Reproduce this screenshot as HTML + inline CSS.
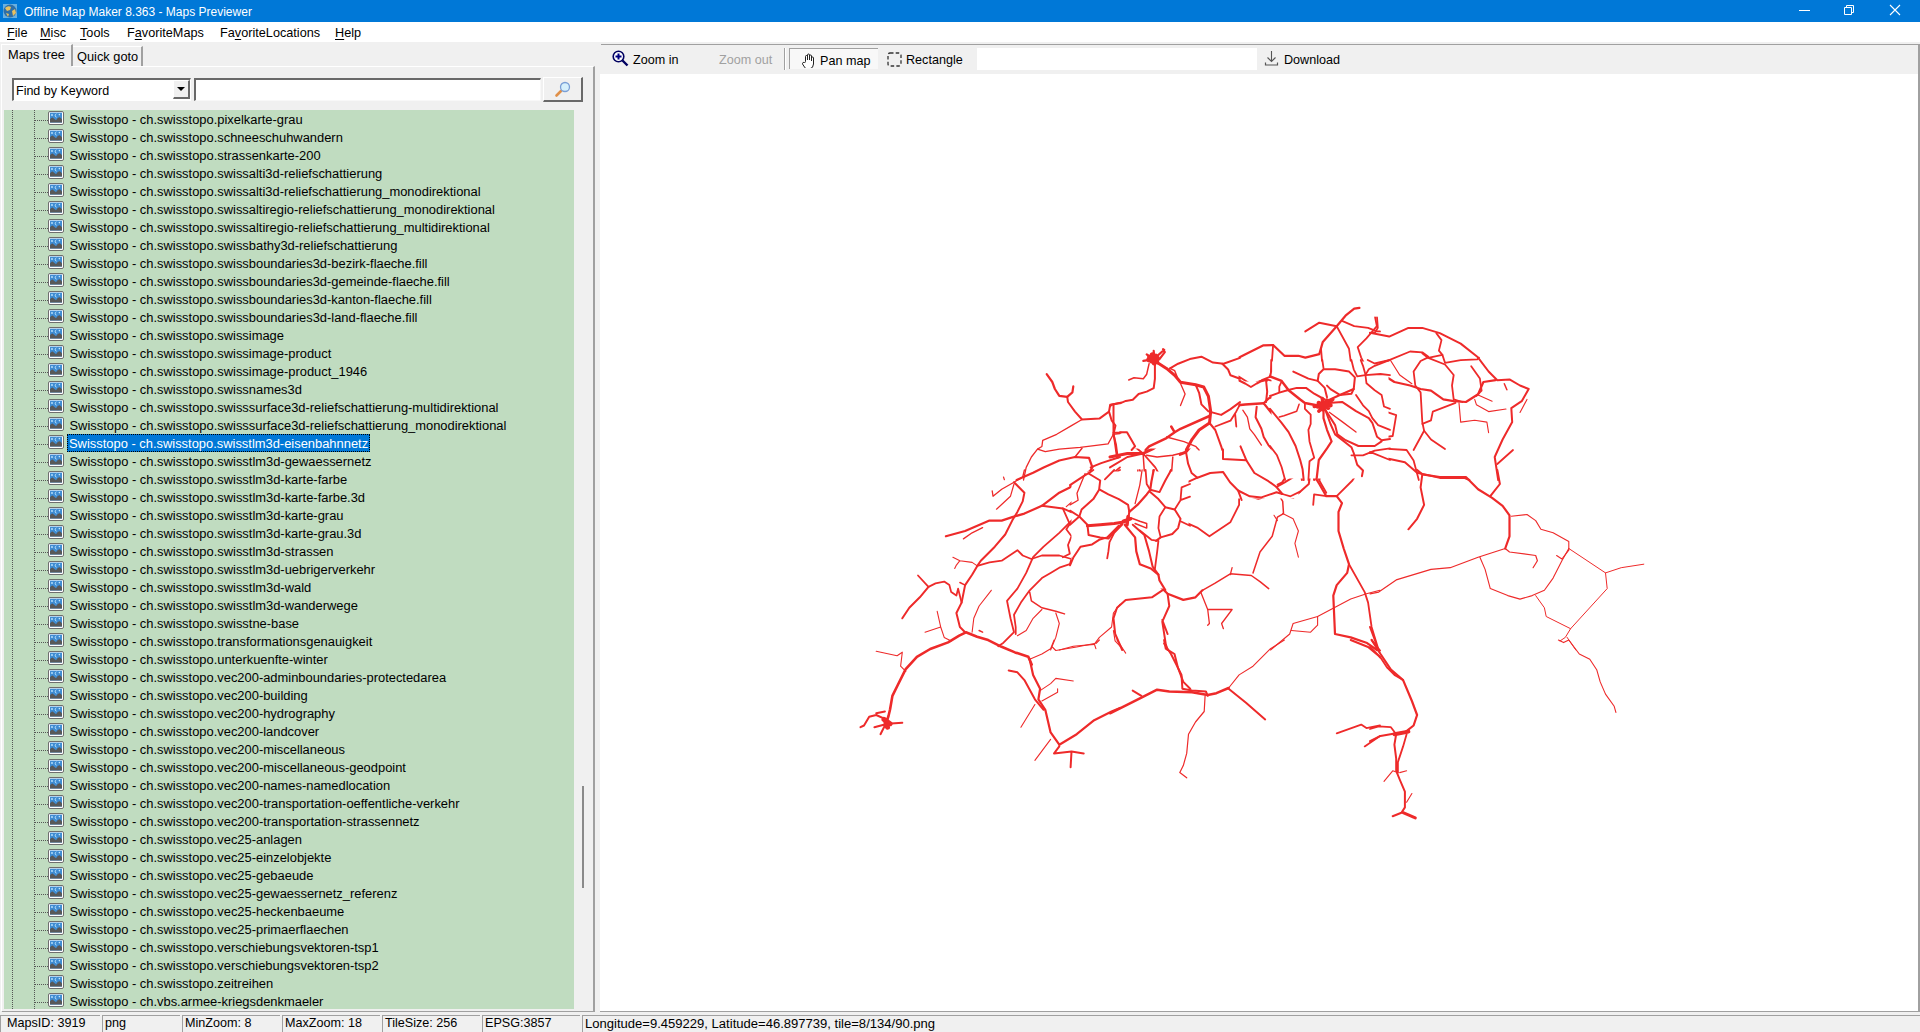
<!DOCTYPE html>
<html><head><meta charset="utf-8">
<style>
*{margin:0;padding:0;box-sizing:border-box}
html,body{width:1920px;height:1032px;overflow:hidden;background:#f0f0f0;font-family:"Liberation Sans",sans-serif;font-size:12px;color:#000}
.abs{position:absolute}
#title{position:absolute;left:0;top:0;width:1920px;height:22px;background:#0078d7;color:#fff}
#title .t{position:absolute;left:24px;top:5px;font-size:12px;line-height:14px;white-space:nowrap}
#menu{position:absolute;left:0;top:22px;width:1920px;height:20px;background:#fff}
#menu span{position:absolute;top:4px;font-size:12.7px;line-height:14px;white-space:nowrap}
#menu u{text-decoration:underline;text-underline-offset:1.5px;text-decoration-thickness:1px}
.tab{position:absolute;font-size:12.8px;line-height:14px;white-space:nowrap}
#panel{position:absolute;left:1px;top:66px;width:594px;height:947px;border-top:1px solid #fff;border-left:1px solid #fff;border-right:2px solid #a0a0a0;border-bottom:2px solid #a0a0a0}
#tree{position:absolute;left:4px;top:110px;width:570px;height:899px;background:#c0dcc0;overflow:hidden}
.row{position:absolute;left:0;width:570px;height:18px}
.row span{position:absolute;left:64.5px;top:2px;font-size:12.92px;line-height:15px;white-space:nowrap;padding:0 1px}
.row.sel span{background:#0078d7;color:#fff;outline:1px dotted #000;outline-offset:-1px;left:63px;padding:2px 2px 0 2px;top:0;line-height:15px;height:18px}
.row .h{position:absolute;left:31px;top:10px;width:13px;border-top:1px dotted #555}
.row .ic{position:absolute;left:44px;top:1px;width:16px;height:14px}
.vd{position:absolute;top:0;height:899px;border-left:1px dotted #555}
#sb{position:absolute;left:575px;top:110px;width:18px;height:899px;background:#f0f0f0}
#sbthumb{position:absolute;left:582px;top:786px;width:2px;height:102px;background:#8a8a8a}
#toolbar{position:absolute;left:601px;top:44px;width:1319px;height:30px;background:#f0f0f0;border-top:1px solid #a0a0a0}
#map{position:absolute;left:600px;top:74px;width:1318px;height:938px;background:#fff}
#mapborder{position:absolute;left:600px;top:1011px;width:1320px;height:2px;background:#a0a0a0}
#maprb{position:absolute;left:1918px;top:44px;width:2px;height:968px;background:#a0a0a0}
.tb{position:absolute;font-size:12.6px;line-height:14px;white-space:nowrap}
#status{position:absolute;left:0;top:1012px;width:1920px;height:20px;background:#f0f0f0}
.cell{position:absolute;top:3px;height:17px;border-top:1px solid #a0a0a0;border-left:1px solid #a0a0a0;font-size:12.6px;line-height:15px;padding-left:6px;white-space:nowrap;overflow:hidden}
</style></head><body>
<svg width="0" height="0" style="position:absolute"><defs><symbol id="ic" viewBox="0 0 16 14">
<rect x="0.5" y="0.5" width="15" height="13" rx="1.5" fill="#fff" stroke="#6e6e6e"/>
<rect x="2" y="1.6" width="12" height="10" fill="#3f8cd2"/>
<path d="M2 11.6V8.2Q3.5 6.2 4.6 6.4L8 9.2Q10 6 11.6 6.2Q13 6.8 14 8.4V11.6z" fill="#585858"/>
<circle cx="4" cy="4" r="0.9" fill="#bfe6ff"/><path d="M8.4 2.8q-1.4.6-1.2 2 .2 1.2 1.4 1.4" fill="none" stroke="#bfe6ff" stroke-width="0.9"/><circle cx="11.4" cy="3.6" r="0.8" fill="#bfe6ff"/>
</symbol></defs></svg>
<div id="title">
 <svg class="abs" style="left:3px;top:4px" width="14" height="14" viewBox="0 0 14 14">
  <rect width="14" height="14" fill="#6ab0e0"/>
  <circle cx="7" cy="7" r="6.5" fill="#2f6fa8"/>
  <path d="M2 4 Q5 1 8 3 L7 6 L4 7 Z M9 7 L12 5 L13 9 L10 12 Z M3 9 L6 10 L5 13 Z" fill="#e8c060"/>
 </svg>
 <div class="t">Offline Map Maker 8.363 - Maps Previewer</div>
 <svg class="abs" style="left:1799px;top:10px" width="11" height="1"><rect width="11" height="1" fill="#fff"/></svg>
 <svg class="abs" style="left:1843px;top:4px" width="12" height="12" viewBox="0 0 12 12"><path d="M1.5 3.5h7v7h-7z M3.5 3.5v-2h7v7h-2" fill="none" stroke="#fff" stroke-width="1"/></svg>
 <svg class="abs" style="left:1889px;top:4px" width="12" height="12" viewBox="0 0 12 12"><path d="M1 1L11 11M11 1L1 11" stroke="#fff" stroke-width="1.1"/></svg>
</div>
<div id="menu">
 <span style="left:7px"><u>F</u>ile</span>
 <span style="left:40px"><u>M</u>isc</span>
 <span style="left:80px"><u>T</u>ools</span>
 <span style="left:127px">F<u>a</u>voriteMaps</span>
 <span style="left:220px">Fa<u>v</u>oriteLocations</span>
 <span style="left:335px"><u>H</u>elp</span>
</div>

<!-- tabs -->
<div class="abs" style="left:1px;top:44px;width:72px;height:23px;background:#f0f0f0;border-top:1px solid #fff;border-left:1px solid #fff;border-right:2px solid #a0a0a0"></div>
<div class="tab" style="left:8px;top:48px">Maps tree</div>
<div class="abs" style="left:73px;top:46px;width:70px;height:20px;background:#f0f0f0;border-top:1px solid #fff;border-right:2px solid #a0a0a0"></div>
<div class="tab" style="left:77px;top:50px">Quick goto</div>

<div id="panel"></div>
<div class="abs" style="left:2px;top:66px;width:70px;height:2px;background:#f0f0f0"></div>

<!-- find bar -->
<div class="abs" style="left:12px;top:78px;width:179px;height:23px;background:#fff;border-top:2px solid #696969;border-left:2px solid #696969;border-bottom:1px solid #fff;border-right:1px solid #fff"></div>
<div class="tb" style="left:16px;top:84px;font-size:12.5px">Find by Keyword</div>
<div class="abs" style="left:173px;top:80px;width:17px;height:19px;background:#f0f0f0;border-top:1px solid #fff;border-left:1px solid #fff;border-right:2px solid #696969;border-bottom:2px solid #696969"></div>
<svg class="abs" style="left:177px;top:87px" width="8" height="5"><path d="M0 0h8L4 4z" fill="#000"/></svg>
<div class="abs" style="left:194px;top:78px;width:347px;height:23px;background:#fff;border-top:2px solid #696969;border-left:2px solid #696969;border-bottom:1px solid #f8f8f8;border-right:1px solid #f8f8f8"></div>
<div class="abs" style="left:543px;top:77px;width:40px;height:25px;background:#f0f0f0;border-top:1px solid #fff;border-left:1px solid #fff;border-right:2px solid #696969;border-bottom:2px solid #696969"></div>
<svg class="abs" style="left:554px;top:81px" width="18" height="17" viewBox="0 0 18 17">
 <line x1="2.5" y1="14.5" x2="7" y2="10" stroke="#e09048" stroke-width="2.6" stroke-linecap="round"/>
 <circle cx="11" cy="6" r="4.5" fill="#d6f0fc" stroke="#7a9fd6" stroke-width="1.3"/>
</svg>

<div id="tree">
 <div class="vd" style="left:8px"></div>
 <div class="vd" style="left:30px"></div>
<div class="row" style="top:0px"><i class="h"></i><svg class="ic" viewBox="0 0 16 14"><use href="#ic"/></svg><span>Swisstopo - ch.swisstopo.pixelkarte-grau</span></div>
<div class="row" style="top:18px"><i class="h"></i><svg class="ic" viewBox="0 0 16 14"><use href="#ic"/></svg><span>Swisstopo - ch.swisstopo.schneeschuhwandern</span></div>
<div class="row" style="top:36px"><i class="h"></i><svg class="ic" viewBox="0 0 16 14"><use href="#ic"/></svg><span>Swisstopo - ch.swisstopo.strassenkarte-200</span></div>
<div class="row" style="top:54px"><i class="h"></i><svg class="ic" viewBox="0 0 16 14"><use href="#ic"/></svg><span>Swisstopo - ch.swisstopo.swissalti3d-reliefschattierung</span></div>
<div class="row" style="top:72px"><i class="h"></i><svg class="ic" viewBox="0 0 16 14"><use href="#ic"/></svg><span>Swisstopo - ch.swisstopo.swissalti3d-reliefschattierung_monodirektional</span></div>
<div class="row" style="top:90px"><i class="h"></i><svg class="ic" viewBox="0 0 16 14"><use href="#ic"/></svg><span>Swisstopo - ch.swisstopo.swissaltiregio-reliefschattierung_monodirektional</span></div>
<div class="row" style="top:108px"><i class="h"></i><svg class="ic" viewBox="0 0 16 14"><use href="#ic"/></svg><span>Swisstopo - ch.swisstopo.swissaltiregio-reliefschattierung_multidirektional</span></div>
<div class="row" style="top:126px"><i class="h"></i><svg class="ic" viewBox="0 0 16 14"><use href="#ic"/></svg><span>Swisstopo - ch.swisstopo.swissbathy3d-reliefschattierung</span></div>
<div class="row" style="top:144px"><i class="h"></i><svg class="ic" viewBox="0 0 16 14"><use href="#ic"/></svg><span>Swisstopo - ch.swisstopo.swissboundaries3d-bezirk-flaeche.fill</span></div>
<div class="row" style="top:162px"><i class="h"></i><svg class="ic" viewBox="0 0 16 14"><use href="#ic"/></svg><span>Swisstopo - ch.swisstopo.swissboundaries3d-gemeinde-flaeche.fill</span></div>
<div class="row" style="top:180px"><i class="h"></i><svg class="ic" viewBox="0 0 16 14"><use href="#ic"/></svg><span>Swisstopo - ch.swisstopo.swissboundaries3d-kanton-flaeche.fill</span></div>
<div class="row" style="top:198px"><i class="h"></i><svg class="ic" viewBox="0 0 16 14"><use href="#ic"/></svg><span>Swisstopo - ch.swisstopo.swissboundaries3d-land-flaeche.fill</span></div>
<div class="row" style="top:216px"><i class="h"></i><svg class="ic" viewBox="0 0 16 14"><use href="#ic"/></svg><span>Swisstopo - ch.swisstopo.swissimage</span></div>
<div class="row" style="top:234px"><i class="h"></i><svg class="ic" viewBox="0 0 16 14"><use href="#ic"/></svg><span>Swisstopo - ch.swisstopo.swissimage-product</span></div>
<div class="row" style="top:252px"><i class="h"></i><svg class="ic" viewBox="0 0 16 14"><use href="#ic"/></svg><span>Swisstopo - ch.swisstopo.swissimage-product_1946</span></div>
<div class="row" style="top:270px"><i class="h"></i><svg class="ic" viewBox="0 0 16 14"><use href="#ic"/></svg><span>Swisstopo - ch.swisstopo.swissnames3d</span></div>
<div class="row" style="top:288px"><i class="h"></i><svg class="ic" viewBox="0 0 16 14"><use href="#ic"/></svg><span>Swisstopo - ch.swisstopo.swisssurface3d-reliefschattierung-multidirektional</span></div>
<div class="row" style="top:306px"><i class="h"></i><svg class="ic" viewBox="0 0 16 14"><use href="#ic"/></svg><span>Swisstopo - ch.swisstopo.swisssurface3d-reliefschattierung_monodirektional</span></div>
<div class="row sel" style="top:324px"><i class="h"></i><svg class="ic" viewBox="0 0 16 14"><use href="#ic"/></svg><span>Swisstopo - ch.swisstopo.swisstlm3d-eisenbahnnetz</span></div>
<div class="row" style="top:342px"><i class="h"></i><svg class="ic" viewBox="0 0 16 14"><use href="#ic"/></svg><span>Swisstopo - ch.swisstopo.swisstlm3d-gewaessernetz</span></div>
<div class="row" style="top:360px"><i class="h"></i><svg class="ic" viewBox="0 0 16 14"><use href="#ic"/></svg><span>Swisstopo - ch.swisstopo.swisstlm3d-karte-farbe</span></div>
<div class="row" style="top:378px"><i class="h"></i><svg class="ic" viewBox="0 0 16 14"><use href="#ic"/></svg><span>Swisstopo - ch.swisstopo.swisstlm3d-karte-farbe.3d</span></div>
<div class="row" style="top:396px"><i class="h"></i><svg class="ic" viewBox="0 0 16 14"><use href="#ic"/></svg><span>Swisstopo - ch.swisstopo.swisstlm3d-karte-grau</span></div>
<div class="row" style="top:414px"><i class="h"></i><svg class="ic" viewBox="0 0 16 14"><use href="#ic"/></svg><span>Swisstopo - ch.swisstopo.swisstlm3d-karte-grau.3d</span></div>
<div class="row" style="top:432px"><i class="h"></i><svg class="ic" viewBox="0 0 16 14"><use href="#ic"/></svg><span>Swisstopo - ch.swisstopo.swisstlm3d-strassen</span></div>
<div class="row" style="top:450px"><i class="h"></i><svg class="ic" viewBox="0 0 16 14"><use href="#ic"/></svg><span>Swisstopo - ch.swisstopo.swisstlm3d-uebrigerverkehr</span></div>
<div class="row" style="top:468px"><i class="h"></i><svg class="ic" viewBox="0 0 16 14"><use href="#ic"/></svg><span>Swisstopo - ch.swisstopo.swisstlm3d-wald</span></div>
<div class="row" style="top:486px"><i class="h"></i><svg class="ic" viewBox="0 0 16 14"><use href="#ic"/></svg><span>Swisstopo - ch.swisstopo.swisstlm3d-wanderwege</span></div>
<div class="row" style="top:504px"><i class="h"></i><svg class="ic" viewBox="0 0 16 14"><use href="#ic"/></svg><span>Swisstopo - ch.swisstopo.swisstne-base</span></div>
<div class="row" style="top:522px"><i class="h"></i><svg class="ic" viewBox="0 0 16 14"><use href="#ic"/></svg><span>Swisstopo - ch.swisstopo.transformationsgenauigkeit</span></div>
<div class="row" style="top:540px"><i class="h"></i><svg class="ic" viewBox="0 0 16 14"><use href="#ic"/></svg><span>Swisstopo - ch.swisstopo.unterkuenfte-winter</span></div>
<div class="row" style="top:558px"><i class="h"></i><svg class="ic" viewBox="0 0 16 14"><use href="#ic"/></svg><span>Swisstopo - ch.swisstopo.vec200-adminboundaries-protectedarea</span></div>
<div class="row" style="top:576px"><i class="h"></i><svg class="ic" viewBox="0 0 16 14"><use href="#ic"/></svg><span>Swisstopo - ch.swisstopo.vec200-building</span></div>
<div class="row" style="top:594px"><i class="h"></i><svg class="ic" viewBox="0 0 16 14"><use href="#ic"/></svg><span>Swisstopo - ch.swisstopo.vec200-hydrography</span></div>
<div class="row" style="top:612px"><i class="h"></i><svg class="ic" viewBox="0 0 16 14"><use href="#ic"/></svg><span>Swisstopo - ch.swisstopo.vec200-landcover</span></div>
<div class="row" style="top:630px"><i class="h"></i><svg class="ic" viewBox="0 0 16 14"><use href="#ic"/></svg><span>Swisstopo - ch.swisstopo.vec200-miscellaneous</span></div>
<div class="row" style="top:648px"><i class="h"></i><svg class="ic" viewBox="0 0 16 14"><use href="#ic"/></svg><span>Swisstopo - ch.swisstopo.vec200-miscellaneous-geodpoint</span></div>
<div class="row" style="top:666px"><i class="h"></i><svg class="ic" viewBox="0 0 16 14"><use href="#ic"/></svg><span>Swisstopo - ch.swisstopo.vec200-names-namedlocation</span></div>
<div class="row" style="top:684px"><i class="h"></i><svg class="ic" viewBox="0 0 16 14"><use href="#ic"/></svg><span>Swisstopo - ch.swisstopo.vec200-transportation-oeffentliche-verkehr</span></div>
<div class="row" style="top:702px"><i class="h"></i><svg class="ic" viewBox="0 0 16 14"><use href="#ic"/></svg><span>Swisstopo - ch.swisstopo.vec200-transportation-strassennetz</span></div>
<div class="row" style="top:720px"><i class="h"></i><svg class="ic" viewBox="0 0 16 14"><use href="#ic"/></svg><span>Swisstopo - ch.swisstopo.vec25-anlagen</span></div>
<div class="row" style="top:738px"><i class="h"></i><svg class="ic" viewBox="0 0 16 14"><use href="#ic"/></svg><span>Swisstopo - ch.swisstopo.vec25-einzelobjekte</span></div>
<div class="row" style="top:756px"><i class="h"></i><svg class="ic" viewBox="0 0 16 14"><use href="#ic"/></svg><span>Swisstopo - ch.swisstopo.vec25-gebaeude</span></div>
<div class="row" style="top:774px"><i class="h"></i><svg class="ic" viewBox="0 0 16 14"><use href="#ic"/></svg><span>Swisstopo - ch.swisstopo.vec25-gewaessernetz_referenz</span></div>
<div class="row" style="top:792px"><i class="h"></i><svg class="ic" viewBox="0 0 16 14"><use href="#ic"/></svg><span>Swisstopo - ch.swisstopo.vec25-heckenbaeume</span></div>
<div class="row" style="top:810px"><i class="h"></i><svg class="ic" viewBox="0 0 16 14"><use href="#ic"/></svg><span>Swisstopo - ch.swisstopo.vec25-primaerflaechen</span></div>
<div class="row" style="top:828px"><i class="h"></i><svg class="ic" viewBox="0 0 16 14"><use href="#ic"/></svg><span>Swisstopo - ch.swisstopo.verschiebungsvektoren-tsp1</span></div>
<div class="row" style="top:846px"><i class="h"></i><svg class="ic" viewBox="0 0 16 14"><use href="#ic"/></svg><span>Swisstopo - ch.swisstopo.verschiebungsvektoren-tsp2</span></div>
<div class="row" style="top:864px"><i class="h"></i><svg class="ic" viewBox="0 0 16 14"><use href="#ic"/></svg><span>Swisstopo - ch.swisstopo.zeitreihen</span></div>
<div class="row" style="top:882px"><i class="h"></i><svg class="ic" viewBox="0 0 16 14"><use href="#ic"/></svg><span>Swisstopo - ch.vbs.armee-kriegsdenkmaeler</span></div>
</div>
<div id="sb"></div>
<div id="sbthumb"></div>

<!-- map side -->
<div id="toolbar"></div>
<svg class="abs" style="left:612px;top:50px" width="17" height="17" viewBox="0 0 17 17">
 <circle cx="6.5" cy="6.5" r="5.3" fill="#fff" stroke="#000060" stroke-width="1.6"/>
 <path d="M6.5 3.5v6M3.5 6.5h6" stroke="#000080" stroke-width="2"/>
 <path d="M10.5 10.5L15.5 15.5" stroke="#000060" stroke-width="2.4"/>
</svg>
<div class="tb" style="left:633px;top:53px">Zoom in</div>
<div class="tb" style="left:719px;top:53px;color:#a0a0a0">Zoom out</div>
<div class="abs" style="left:784px;top:48px;width:1px;height:22px;background:#a0a0a0"></div>
<div class="abs" style="left:785px;top:48px;width:1px;height:22px;background:#fff"></div>
<div class="abs" style="left:789px;top:48px;width:89px;height:21px;background:#f8f8f8;border-top:1px solid #a0a0a0;border-left:1px solid #a0a0a0"></div>
<svg class="abs" style="left:802px;top:53px" width="13" height="15" viewBox="0 0 13 15">
 <path d="M3.5 8.5V3.5q0-1 1-1t1 1V7 2q0-1 1-1t1 1v5-4q0-1 1-1t1 1v5-3q0-1 1-1t1 1v6q0 4-4 5h-2q-2 0-3-2l-2-3q-.5-1 .5-1.5t1.5.5z" fill="#fff" stroke="#222" stroke-width="1"/>
</svg>
<div class="tb" style="left:820px;top:54px">Pan map</div>
<svg class="abs" style="left:887px;top:52px" width="15" height="15" viewBox="0 0 15 15">
 <rect x="1" y="1" width="13" height="13" rx="2" fill="none" stroke="#333" stroke-width="1.3" stroke-dasharray="3.5 2.2"/>
</svg>
<div class="tb" style="left:906px;top:53px">Rectangle</div>
<div class="abs" style="left:977px;top:48px;width:280px;height:22px;background:#fff"></div>
<svg class="abs" style="left:1264px;top:50px" width="15" height="17" viewBox="0 0 15 17">
 <path d="M7.5 1v10M3.5 7.5l4 4 4-4" fill="none" stroke="#555" stroke-width="1.1"/>
 <path d="M1.5 12.5v2.5h12v-2.5" fill="none" stroke="#555" stroke-width="1.2"/>
</svg>
<div class="tb" style="left:1284px;top:53px">Download</div>

<div id="map"><svg width="1318" height="938" viewBox="600 74 1318 938" style="position:absolute;left:0;top:0">
<defs>
<mask id="mb" maskUnits="userSpaceOnUse" x="600" y="74" width="1318" height="938"><rect x="600" y="74" width="1318" height="938" fill="#fff"/><rect x="1271.5" y="361.5" width="117.0" height="117.0" fill="#000"/><rect x="1121.5" y="331.5" width="117.0" height="117.0" fill="#000"/><rect x="1071.5" y="471.5" width="117.0" height="117.0" fill="#000"/><rect x="1181.5" y="381.5" width="117.0" height="117.0" fill="#000"/></mask>
<mask id="md0" maskUnits="userSpaceOnUse" x="600" y="74" width="1318" height="938"><rect x="1268.5" y="358.5" width="123.0" height="123.0" fill="#fff"/></mask>
<mask id="md1" maskUnits="userSpaceOnUse" x="600" y="74" width="1318" height="938"><rect x="1118.5" y="328.5" width="123.0" height="123.0" fill="#fff"/><rect x="1271.5" y="361.5" width="117.0" height="117.0" fill="#000"/></mask>
<mask id="md2" maskUnits="userSpaceOnUse" x="600" y="74" width="1318" height="938"><rect x="1068.5" y="468.5" width="123.0" height="123.0" fill="#fff"/><rect x="1271.5" y="361.5" width="117.0" height="117.0" fill="#000"/><rect x="1121.5" y="331.5" width="117.0" height="117.0" fill="#000"/></mask>
<mask id="md3" maskUnits="userSpaceOnUse" x="600" y="74" width="1318" height="938"><rect x="1178.5" y="378.5" width="123.0" height="123.0" fill="#fff"/><rect x="1271.5" y="361.5" width="117.0" height="117.0" fill="#000"/><rect x="1121.5" y="331.5" width="117.0" height="117.0" fill="#000"/><rect x="1071.5" y="471.5" width="117.0" height="117.0" fill="#000"/></mask>
</defs>
<g fill="none" stroke="#ee2a2a" stroke-linejoin="round" stroke-linecap="round">
<g mask="url(#mb)">
<path stroke-width="2.20" d="M1046.7,374.1 L1052.3,382.0 L1054.9,389.0 L1059.3,395.9 L1067.2,396.8 L1072.4,392.4 L1073.3,386.3"/>
<path stroke-width="2.00" d="M1067.2,396.8 L1068.0,402.0 L1075.0,411.6 L1082.0,419.5 L1099.4,418.6 L1109.0,411.6 L1110.2,404.7 L1120.0,402.9"/>
<path stroke-width="2.00" d="M1109.0,411.6 L1111.6,420.3 L1115.5,425.6 L1113.4,434.3 L1116.0,444.8 L1117.7,457.8"/>
<path stroke-width="1.50" d="M1113.4,434.3 L1120.0,433.4"/>
<path stroke-width="1.30" d="M1082.0,419.5 L1071.5,425.6 L1056.7,434.3 L1042.7,440.4 L1041.9,446.5 L1037.5,449.1 L1031.4,457.0 L1026.2,467.4 L1023.5,480.0"/>
<path stroke-width="1.30" d="M1037.5,449.1 L1045.3,451.7 L1059.3,449.1 L1080.2,447.4 L1108.1,443.9 L1113.4,434.3"/>
<path stroke-width="2.20" d="M1016.6,480.0 L1033.1,472.7 L1043.6,467.4 L1059.3,460.5 L1075.0,457.0 L1089.0,457.8 L1092.4,467.4 L1089.0,472.7 L1080.2,480.0"/>
<path stroke-width="1.50" d="M1075.0,457.0 L1082.0,448.3"/>
<path stroke-width="1.80" d="M1089.0,472.7 L1099.4,480.0"/>
<path stroke-width="2.00" d="M1090.7,467.4 L1101.2,463.1 L1117.7,457.8 L1120.0,457.0"/>
<path stroke-width="1.80" d="M1104.7,480.0 L1120.0,467.4"/>
<path stroke-width="1.20" d="M1003.5,477.0 L1004.4,479.7"/>
<path stroke-width="6.00" d="M1150.1,357.6 L1157.1,361.0 M1152.7,354.1 L1154.5,364.5 M1147.5,361.0 L1159.7,357.6"/>
<path stroke-width="2.20" d="M1153.6,359.3 L1172.8,365.4 L1185.0,361.0 L1200.7,356.7 L1221.6,363.7 L1232.1,361.0 L1246.0,354.1 L1263.5,345.3 L1273.1,345.0 L1284.4,355.8 L1298.4,355.8 L1305.3,357.6 L1319.3,354.1 L1322.8,341.9 L1336.7,326.2 L1345.5,315.7 L1354.2,308.7 L1359.4,307.8"/>
<path stroke-width="2.00" d="M1336.7,326.2 L1319.3,322.7 L1305.3,331.4"/>
<path stroke-width="1.80" d="M1342.0,320.9 L1354.2,326.2 L1368.1,327.9 L1376.9,331.4 L1380.0,331.4"/>
<path stroke-width="3.00" d="M1153.6,359.3 L1174.5,371.5 L1183.3,382.0 L1197.2,383.7 L1205.9,392.4 L1209.4,411.6 L1209.4,422.1"/>
<path stroke-width="1.50" d="M1174.5,371.5 L1173.7,365.4"/>
<path stroke-width="1.30" d="M1179.8,382.0 L1185.0,392.4 L1180.6,404.7"/>
<path stroke-width="2.00" d="M1153.6,360.2 L1154.5,373.3 L1153.6,389.0 L1141.4,392.4 L1127.4,401.2 L1111.7,404.7 L1110.0,406.4"/>
<path stroke-width="1.30" d="M1153.6,366.3 L1144.9,376.7 L1129.2,380.2"/>
<path stroke-width="1.80" d="M1197.2,383.7 L1199.0,394.2 L1204.2,408.1 L1210.3,413.4"/>
<path stroke-width="3.00" d="M1209.4,415.1 L1192.0,422.1 L1176.3,430.8 L1167.6,437.8 L1153.6,448.3 L1143.1,453.5 L1127.4,453.5 L1110.0,457.0"/>
<path stroke-width="1.50" d="M1171.0,424.7 L1172.8,430.8"/>
<path stroke-width="2.50" d="M1210.3,413.4 L1218.1,415.1 L1228.6,408.1 L1235.6,404.7 L1249.5,402.9 L1261.7,402.9 L1267.0,397.7 L1279.2,392.4 L1289.7,392.4 L1301.9,401.2 L1319.3,404.7"/>
<path stroke-width="2.00" d="M1209.4,422.1 L1214.7,427.3 L1221.6,443.0 L1223.4,458.7 L1246.0,460.5 L1258.3,474.4 L1261.7,480.0"/>
<path stroke-width="2.50" d="M1209.4,422.1 L1199.0,434.3 L1188.5,448.3 L1186.7,457.0 L1192.0,474.4 L1195.5,480.0"/>
<path stroke-width="1.50" d="M1186.7,451.7 L1172.8,455.2 L1157.1,457.0 L1146.6,455.2"/>
<path stroke-width="1.50" d="M1258.3,403.8 L1256.5,411.6 L1261.7,430.8 L1265.2,444.8 L1274.0,464.0 L1281.8,480.0"/>
<path stroke-width="2.00" d="M1263.5,402.9 L1275.7,413.4 L1284.4,425.6 L1293.1,443.0 L1300.1,464.0 L1301.9,480.0"/>
<path stroke-width="1.20" d="M1242.6,408.1 L1247.8,422.1 L1254.8,432.6 L1260.9,444.8"/>
<path stroke-width="1.20" d="M1235.6,406.4 L1235.9,427.3"/>
<path stroke-width="1.50" d="M1239.1,444.8 L1246.0,458.7"/>
<path stroke-width="1.80" d="M1267.0,380.2 L1267.0,397.7"/>
<path stroke-width="1.80" d="M1256.5,382.0 L1267.0,379.4 L1280.9,383.7 L1286.2,390.7"/>
<path stroke-width="1.80" d="M1221.6,363.7 L1230.3,375.0 L1239.1,376.7 L1253.0,385.5 L1261.7,380.2 L1270.5,376.7"/>
<path stroke-width="1.80" d="M1273.1,345.0 L1272.2,357.6 L1270.5,376.7"/>
<path stroke-width="3.00" d="M1280.9,383.7 L1301.9,401.2"/>
<path stroke-width="1.20" d="M1298.4,401.2 L1297.5,411.6 L1282.7,416.9"/>
<path stroke-width="7.00" d="M1319.3,402.9 L1326.3,409.9 M1317.6,408.1 L1328.0,404.7 M1322.8,399.4 L1323.7,413.4"/>
<path stroke-width="2.00" d="M1322.8,406.4 L1326.3,397.7 L1336.7,394.2 L1352.4,395.1 L1354.2,382.0 L1349.0,373.3 L1333.3,369.8 L1321.0,373.3 L1317.6,382.0 L1326.3,394.2"/>
<path stroke-width="2.00" d="M1293.1,371.5 L1319.3,382.0 L1326.3,390.7"/>
<path stroke-width="2.00" d="M1322.8,411.6 L1328.0,432.6 L1331.5,443.0 L1322.8,457.0 L1319.3,480.0"/>
<path stroke-width="2.20" d="M1322.8,408.1 L1335.0,427.3 L1342.0,439.5 L1359.4,444.8 L1380.0,446.5"/>
<path stroke-width="1.20" d="M1329.8,415.1 L1342.0,422.1 L1355.9,432.6"/>
<path stroke-width="2.00" d="M1335.0,401.2 L1357.7,411.6 L1371.6,422.1 L1376.9,436.0 L1380.0,444.8"/>
<path stroke-width="2.00" d="M1324.5,404.7 L1307.1,404.7 L1305.3,411.6 L1307.1,425.6 L1312.3,457.0 L1314.1,480.0"/>
<path stroke-width="2.00" d="M1354.2,382.0 L1357.7,373.3 L1368.1,369.8 L1380.0,362.8"/>
<path stroke-width="1.80" d="M1357.7,375.0 L1364.7,378.5 L1366.4,387.2 L1376.9,392.4 L1380.0,392.4"/>
<path stroke-width="1.80" d="M1336.7,326.2 L1349.0,348.8 L1352.4,373.3"/>
<path stroke-width="1.80" d="M1321.0,348.8 L1322.8,369.8"/>
<path stroke-width="1.80" d="M1350.7,453.5 L1361.2,457.0 L1380.0,453.5"/>
<path stroke-width="1.80" d="M1352.4,453.5 L1357.7,467.4 L1362.9,474.4"/>
<path stroke-width="2.00" d="M1113.5,404.7 L1113.5,432.6 L1117.0,457.0"/>
<path stroke-width="1.80" d="M1113.5,432.6 L1127.4,432.6 L1134.4,446.5 L1143.1,453.5"/>
<path stroke-width="1.50" d="M1143.1,453.5 L1144.9,480.0"/>
<path stroke-width="1.80" d="M1143.1,453.5 L1155.3,467.4 L1162.3,480.0"/>
<path stroke-width="2.00" d="M1110.0,467.4 L1127.4,457.0 L1143.1,453.5"/>
<path stroke-width="1.50" d="M1172.8,457.0 L1171.0,480.0"/>
<path stroke-width="1.80" d="M1375.1,317.4 L1376.9,326.2 L1366.4,338.4 L1357.7,347.1 L1361.2,357.6 L1366.4,368.0"/>
<path stroke-width="1.80" d="M1377.0,317.4 L1377.8,327.9 L1375.2,332.3 L1370.0,333.1"/>
<path stroke-width="2.00" d="M1370.0,332.8 L1389.2,336.6 L1408.4,327.9 L1422.3,327.9 L1439.8,333.1 L1460.7,343.6 L1477.3,356.7 L1488.6,371.5 L1497.3,380.2 L1509.5,379.4 L1520.0,385.5 L1528.7,389.0 L1521.7,401.2 L1511.3,408.1 L1512.2,422.1 L1502.6,439.5 L1494.7,457.0 L1498.2,480.0"/>
<path stroke-width="1.80" d="M1436.3,333.1 L1441.5,340.1 L1438.9,350.6 L1442.4,354.9 L1429.3,357.6"/>
<path stroke-width="1.80" d="M1442.4,354.9 L1445.0,362.8 L1460.7,360.2 L1477.3,359.3 L1479.0,357.6"/>
<path stroke-width="1.80" d="M1370.0,366.3 L1389.2,360.2 L1410.1,351.5 L1422.3,352.3 L1428.4,356.7"/>
<path stroke-width="1.80" d="M1422.3,353.2 L1427.6,357.6 L1445.0,364.5 L1453.7,375.0 L1452.0,385.5 L1453.7,399.4 L1462.4,402.0"/>
<path stroke-width="1.80" d="M1427.6,357.6 L1420.6,361.0 L1413.6,371.5 L1415.3,385.5 L1420.6,392.4 L1422.3,422.1 L1424.1,430.8 L1413.6,450.0"/>
<path stroke-width="2.20" d="M1370.0,373.3 L1380.5,373.3 L1394.4,382.0 L1410.1,385.5 L1420.6,389.0 L1431.0,390.7 L1443.3,399.4 L1453.7,401.2 L1465.9,402.0 L1478.1,394.2 L1483.4,382.0 L1495.6,380.2"/>
<path stroke-width="1.80" d="M1471.2,366.3 L1479.9,378.5 L1481.6,390.7 L1476.4,395.9"/>
<path stroke-width="1.20" d="M1390.9,361.0 L1399.7,375.0 L1411.9,383.7"/>
<path stroke-width="1.80" d="M1455.5,402.9 L1432.8,411.6 L1431.0,420.3 L1422.3,423.8"/>
<path stroke-width="1.80" d="M1424.1,430.8 L1431.0,439.5 L1445.0,449.1"/>
<path stroke-width="1.10" d="M1459.0,402.9 L1460.7,422.1 L1474.7,420.3 L1486.9,422.1 L1488.6,432.6"/>
<path stroke-width="1.10" d="M1474.7,399.4 L1476.4,404.7 L1488.6,411.6 L1506.0,409.0"/>
<path stroke-width="1.10" d="M1478.1,395.1 L1492.1,401.2"/>
<path stroke-width="1.50" d="M1504.3,383.7 L1506.9,389.8"/>
<path stroke-width="1.10" d="M1527.0,399.4 L1520.0,412.5"/>
<path stroke-width="1.80" d="M1497.3,464.0 L1513.0,450.0"/>
<path stroke-width="1.80" d="M1370.0,387.2 L1380.5,389.0 L1382.2,401.2 L1385.7,411.6 L1396.2,415.1 L1392.7,436.0 L1380.5,437.8 L1373.5,425.6 L1370.0,422.1"/>
<path stroke-width="1.80" d="M1370.0,411.6 L1375.2,418.6 L1380.5,429.1 L1382.2,439.5 L1375.2,446.5 L1370.0,444.8"/>
<path stroke-width="1.80" d="M1370.0,450.0 L1380.5,448.3 L1406.6,450.0 L1413.6,460.5 L1418.8,480.0"/>
<path stroke-width="2.00" d="M1370.0,453.5 L1380.5,457.0 L1404.9,462.2 L1417.1,472.7 L1439.8,477.9 L1464.2,477.9 L1469.4,480.0"/>
<path stroke-width="1.30" d="M1024.4,470.0 L1022.7,477.0 L1014.0,482.2 L1001.7,489.2 L993.0,496.2 L992.2,490.9"/>
<path stroke-width="2.00" d="M1014.0,482.2 L1024.4,492.7 L1022.7,501.4 L1017.4,511.9 L1012.2,520.6 L1005.2,534.5 L994.8,546.7 L980.8,560.7 L977.3,565.9 L972.1,574.7 L965.1,585.1 L961.6,602.6 L956.4,613.0 L959.9,627.0 L965.1,632.2"/>
<path stroke-width="1.20" d="M1014.0,484.0 L1010.5,496.2 L996.5,509.2"/>
<path stroke-width="2.20" d="M945.9,536.3 L965.1,531.0 L989.5,520.6 L1001.7,520.6 L1012.2,517.1 L1024.4,513.6 L1041.9,505.8 L1059.3,492.7 L1069.8,487.4 L1083.7,475.2 L1089.0,471.7"/>
<path stroke-width="1.30" d="M963.4,538.9 L972.1,532.8 L982.6,527.6"/>
<path stroke-width="2.00" d="M1041.9,505.8 L1062.8,508.4 L1078.5,515.3 L1087.2,522.3 L1097.7,525.8 L1120.0,524.1"/>
<path stroke-width="1.80" d="M1062.8,508.4 L1069.8,524.1 L1066.3,529.3 L1071.5,536.3 L1068.0,545.0 L1069.8,553.7 L1062.8,557.2"/>
<path stroke-width="1.20" d="M1090.7,470.0 L1083.7,484.0 L1078.5,496.2 L1066.3,506.6"/>
<path stroke-width="2.00" d="M1090.7,471.7 L1101.2,480.5 L1099.4,489.2 L1106.4,492.7 L1120.0,499.7"/>
<path stroke-width="1.80" d="M1120.0,470.0 L1104.7,478.7 L1101.2,484.0 L1097.7,492.7 L1082.0,510.1 L1069.8,522.3 L1059.3,532.8 L1043.6,546.7 L1033.1,557.2 L1026.2,572.9 L1017.4,588.6 L1007.0,600.8 L1010.5,618.3 L1014.0,632.2 L1003.5,642.7 L998.3,646.2"/>
<path stroke-width="1.80" d="M977.3,565.9 L989.5,562.4 L1001.7,560.7 L1017.4,550.2 L1022.7,555.5 L1031.4,559.0 L1041.9,555.5 L1059.3,555.5 L1071.5,559.0 L1069.8,564.2 L1059.3,567.7 L1050.6,572.9 L1041.9,578.1 L1029.7,590.3 L1020.9,602.6 L1014.0,614.8 L1015.7,627.0 L1015.7,634.0"/>
<path stroke-width="1.80" d="M1087.2,522.3 L1087.2,532.8 L1101.2,538.9 L1090.7,543.3 L1078.5,548.5 L1071.5,559.0"/>
<path stroke-width="1.80" d="M1120.0,524.1 L1109.9,534.5 L1108.1,550.2 L1107.3,557.2"/>
<path stroke-width="1.50" d="M1120.0,525.8 L1102.9,538.0"/>
<path stroke-width="1.10" d="M952.9,557.2 L959.9,560.7 L956.4,565.1 L954.7,568.5 M959.9,560.7 L972.1,562.4 L977.3,565.9"/>
<path stroke-width="1.80" d="M918.0,575.5 L928.5,586.9 L935.5,583.4 L944.2,581.6 L949.4,585.1 L951.2,592.1 L956.4,595.6 L958.1,588.6 L961.6,602.6"/>
<path stroke-width="2.00" d="M928.5,586.9 L919.8,597.3 L909.3,607.8 L902.3,618.3"/>
<path stroke-width="1.50" d="M959.9,582.5 L965.1,585.1"/>
<path stroke-width="1.10" d="M991.3,590.3 L979.1,606.0 L973.8,618.3 L972.1,632.2"/>
<path stroke-width="1.50" d="M1029.7,592.1 L1031.4,600.8 L1041.9,607.8 L1055.8,611.3 L1064.5,613.9"/>
<path stroke-width="1.10" d="M1041.9,609.5 L1033.1,618.3 L1026.2,630.5 L1017.4,635.7"/>
<path stroke-width="1.10" d="M1055.8,613.0 L1059.3,623.5 L1055.8,637.4 L1050.6,650.0"/>
<path stroke-width="1.10" d="M937.2,611.3 L940.7,627.0 L925.0,632.2 M940.7,627.0 L944.2,637.4 L951.2,640.9"/>
<path stroke-width="1.50" d="M979.1,630.5 L982.6,632.2"/>
<path stroke-width="1.10" d="M1120.0,604.3 L1113.4,613.0 L1111.6,627.0 L1099.4,637.4 L1094.2,644.4 L1073.3,646.2 L1059.3,650.0"/>
<path stroke-width="1.10" d="M1113.4,630.5 L1115.1,640.9 L1120.0,646.2"/>
<path stroke-width="7.00" d="M1120.5,520.6 L1127.4,524.1 M1124.0,517.1 L1124.8,527.6"/>
<path stroke-width="2.00" d="M1110.0,496.2 L1127.4,504.9 L1129.2,511.9 L1124.0,522.3"/>
<path stroke-width="3.00" d="M1110.0,524.1 L1124.0,522.3"/>
<path stroke-width="2.00" d="M1110.0,539.8 L1120.5,527.6 L1124.0,522.3"/>
<path stroke-width="2.20" d="M1124.0,522.3 L1136.2,531.0 L1139.7,546.7 L1141.4,564.2 L1153.6,567.7 L1158.8,574.7 L1160.6,586.9 L1167.6,593.8 L1183.3,599.9 L1195.5,597.3 L1202.4,590.3"/>
<path stroke-width="1.50" d="M1202.4,590.3 L1214.7,583.4 L1230.3,573.8 L1251.3,575.5 L1260.0,581.6 L1268.7,588.6"/>
<path stroke-width="1.80" d="M1127.4,525.8 L1141.4,529.3 L1146.6,541.5 L1150.1,553.7 L1157.1,572.9"/>
<path stroke-width="2.00" d="M1124.0,520.6 L1144.9,492.7 L1150.1,487.4 L1151.9,477.0 L1153.6,470.0"/>
<path stroke-width="1.80" d="M1129.2,511.9 L1139.7,499.7 L1150.1,489.2"/>
<path stroke-width="1.80" d="M1150.1,487.4 L1141.4,475.2 L1139.7,470.0"/>
<path stroke-width="1.50" d="M1137.9,470.0 L1136.2,492.7 L1129.2,508.4"/>
<path stroke-width="1.80" d="M1150.1,489.2 L1162.3,503.1 L1174.5,510.1 L1181.5,520.6 L1197.2,527.6 L1209.4,536.3 L1230.3,522.3 L1239.1,504.9 L1239.1,494.4 L1228.6,478.7 L1223.4,471.7 L1205.9,473.5 L1195.5,478.7 L1181.5,487.4 L1178.0,497.9 L1174.5,510.1"/>
<path stroke-width="1.80" d="M1162.3,503.1 L1157.1,515.3 L1158.8,529.3 L1152.7,540.6 L1160.6,536.3 L1178.0,531.0 L1181.5,520.6"/>
<path stroke-width="1.50" d="M1181.5,496.2 L1186.7,497.0"/>
<path stroke-width="1.80" d="M1188.5,470.0 L1195.5,477.0"/>
<path stroke-width="1.80" d="M1171.0,470.0 L1160.6,490.9"/>
<path stroke-width="2.00" d="M1225.1,470.0 L1230.3,482.2 L1242.6,494.4 L1258.3,498.8 L1275.7,494.4 L1280.9,490.9 L1291.4,482.2 L1301.9,473.5 L1307.1,470.0"/>
<path stroke-width="2.00" d="M1249.5,470.0 L1263.5,478.7 L1274.0,485.7 L1282.7,494.4"/>
<path stroke-width="2.00" d="M1280.9,494.4 L1293.1,497.9 L1308.8,484.0 L1310.6,470.0"/>
<path stroke-width="1.50" d="M1277.4,492.7 L1282.7,501.4 L1283.5,513.6 L1277.4,517.1 L1272.2,536.3 L1260.0,552.0 L1253.0,572.9"/>
<path stroke-width="1.10" d="M1282.7,513.6 L1293.1,518.8 L1298.4,531.0 L1294.9,543.3 L1298.4,557.2"/>
<path stroke-width="1.10" d="M1274.0,515.3 L1277.4,520.6"/>
<path stroke-width="2.20" d="M1310.6,470.0 L1319.3,484.0 L1326.3,496.2 L1336.7,496.2 L1342.0,503.1 L1338.5,511.9 L1338.5,531.0 L1343.7,548.5 L1349.0,564.2 L1347.2,572.9 L1336.7,585.1 L1333.3,595.6 L1335.0,634.0 L1350.7,637.4 L1366.4,642.7 L1376.9,650.0"/>
<path stroke-width="1.80" d="M1317.6,470.0 L1319.3,480.5 L1326.3,492.7"/>
<path stroke-width="1.80" d="M1326.3,496.2 L1314.1,494.4 L1313.2,504.9"/>
<path stroke-width="1.80" d="M1336.7,496.2 L1352.4,480.5 L1359.4,470.0"/>
<path stroke-width="1.50" d="M1362.9,470.0 L1362.9,475.2"/>
<path stroke-width="1.80" d="M1349.0,564.2 L1364.7,592.1 L1368.1,602.6 L1371.6,627.0 L1378.6,650.0"/>
<path stroke-width="1.10" d="M1270.5,650.0 L1289.7,634.0 L1293.1,623.5 L1317.6,616.5 L1350.7,599.1 L1366.4,593.8 L1380.0,590.3"/>
<path stroke-width="1.10" d="M1291.4,630.5 L1310.6,632.2 L1317.6,625.2 L1317.6,616.5"/>
<path stroke-width="2.00" d="M1162.3,590.3 L1151.9,597.3 L1125.7,599.9 L1117.0,607.8 L1113.5,618.3 L1115.2,634.0 L1122.2,650.0"/>
<path stroke-width="2.00" d="M1167.6,593.8 L1169.3,606.0 L1162.3,621.7 L1165.8,644.4 L1167.6,650.0 M1162.3,620.0 L1167.6,634.0"/>
<path stroke-width="1.30" d="M1200.7,592.1 L1204.2,600.8 L1207.7,609.5 L1232.1,609.5 L1221.6,623.5 L1223.4,628.7 M1207.7,609.5 L1209.4,623.5 L1207.7,625.2"/>
<path stroke-width="1.30" d="M1232.1,567.7 L1230.3,574.7"/>
<path stroke-width="2.20" d="M1417.1,470.0 L1422.3,474.4 L1439.8,477.0 L1465.9,477.0 L1478.1,489.2 L1492.1,497.9 L1502.6,505.8 L1509.5,515.3 L1509.5,536.3 L1505.2,548.5"/>
<path stroke-width="2.00" d="M1422.3,474.4 L1420.6,487.4 L1424.1,504.9 L1417.1,518.8 L1408.4,529.3"/>
<path stroke-width="2.00" d="M1497.3,470.0 L1499.9,484.0 L1490.3,496.2"/>
<path stroke-width="1.20" d="M1370.0,593.8 L1378.7,592.1 L1396.2,579.9 L1431.0,569.4 L1450.2,567.7 L1478.1,557.2 L1505.2,548.5 L1509.5,552.0 L1535.7,555.5 L1537.4,560.7 L1533.1,567.7"/>
<path stroke-width="1.10" d="M1511.3,516.2 L1527.0,514.5 L1535.7,520.6 L1540.9,529.3 L1553.1,532.8 L1568.8,541.5 L1568.8,550.2 L1561.9,559.0 L1556.6,555.5"/>
<path stroke-width="1.10" d="M1568.8,548.5 L1561.9,560.7 L1553.1,578.1 L1544.4,590.3 L1532.2,595.6 L1520.0,599.1 L1507.8,595.6 L1490.3,588.6 L1485.1,569.4 L1479.9,557.2"/>
<path stroke-width="1.00" d="M1568.8,548.5 L1605.5,572.9 L1607.2,588.6 L1570.6,628.7 L1546.2,616.5 L1544.4,607.8 L1535.7,595.6"/>
<path stroke-width="1.00" d="M1605.5,572.9 L1621.2,567.7 L1643.8,564.2"/>
<path stroke-width="1.00" d="M1570.6,628.7 L1565.3,637.4 L1560.1,640.9 M1567.1,637.4 L1575.8,650.0"/>
<path stroke-width="2.00" d="M1370.0,627.0 L1375.2,640.9 L1377.0,650.0"/>
<path stroke-width="2.00" d="M887.5,720.2 L876.2,715.0 L869.2,716.7 L864.0,725.5 L860.5,727.2 M876.2,713.3 L884.9,711.5 M874.4,727.2 L887.5,723.7 L902.3,722.8 M880.5,734.2 L884.9,725.5"/>
<path stroke-width="5.00" d="M884.0,719.4 L890.1,723.7 M885.8,722.0 L887.5,727.2"/>
<path stroke-width="1.10" d="M876.2,651.3 L897.1,655.7 L902.3,652.2 L900.6,666.2 L905.8,671.4"/>
<path stroke-width="2.20" d="M1029.7,659.2 L1033.1,674.9 L1040.1,688.8 L1038.4,699.3 L1045.3,709.8 L1050.6,732.4 L1059.3,744.7"/>
<path stroke-width="2.00" d="M1008.7,670.5 L1017.4,672.3 L1024.4,680.1 L1034.9,699.3 L1043.6,709.8"/>
<path stroke-width="1.10" d="M1034.9,704.5 L1020.9,727.2"/>
<path stroke-width="2.20" d="M1059.3,744.7 L1076.7,734.2 L1094.2,720.2 L1111.6,711.5 L1120.0,708.0"/>
<path stroke-width="2.00" d="M1059.3,746.4 L1054.1,753.4 L1071.5,751.6 L1083.7,753.4 M1071.5,751.6 L1070.6,767.3"/>
<path stroke-width="1.10" d="M1050.6,739.4 L1034.9,760.3"/>
<path stroke-width="1.10" d="M1029.7,659.2 L1041.9,654.0 L1050.6,648.7 L1054.1,640.0"/>
<path stroke-width="1.10" d="M1052.3,647.0 L1055.8,650.5 L1076.7,647.0 L1094.2,643.5 L1095.9,648.7 M1095.9,643.5 L1099.4,640.0"/>
<path stroke-width="1.10" d="M1040.1,690.6 L1050.6,683.6 L1055.8,678.4 L1073.3,681.0 M1041.9,701.0 L1057.6,692.3 L1057.6,688.8"/>
<path stroke-width="2.00" d="M1164.1,640.0 L1165.8,648.7 L1174.5,654.0 L1178.0,667.9 L1183.3,681.9 L1190.2,688.8"/>
<path stroke-width="2.00" d="M1164.1,643.5 L1171.0,654.0 L1181.5,674.9 L1182.4,688.8 L1192.0,690.6 L1205.9,691.5 L1207.7,695.8"/>
<path stroke-width="2.50" d="M1110.0,713.3 L1124.0,706.3 L1141.4,697.6 L1157.1,689.7 L1169.3,691.5 L1192.0,692.3 L1207.7,694.9 L1216.4,693.2 L1228.6,688.0"/>
<path stroke-width="2.00" d="M1132.7,690.6 L1141.4,695.8"/>
<path stroke-width="1.10" d="M1228.6,688.0 L1239.1,674.9 L1253.0,666.2 L1270.5,648.7 L1284.4,640.0"/>
<path stroke-width="2.00" d="M1228.6,688.8 L1246.0,702.8 L1265.2,719.4"/>
<path stroke-width="1.20" d="M1205.1,695.8 L1204.2,711.5 L1195.5,722.0 L1188.5,734.2 L1186.7,753.4 L1183.3,765.6 L1179.8,772.6 L1186.7,777.8"/>
<path stroke-width="1.10" d="M1117.0,640.0 L1125.7,653.1"/>
<path stroke-width="1.80" d="M1336.7,733.3 L1361.2,724.6 L1366.4,728.1 L1380.0,725.5"/>
<path stroke-width="1.80" d="M1364.7,746.4 L1380.0,735.9"/>
<path stroke-width="2.00" d="M1350.7,640.0 L1368.1,647.0 L1378.6,655.7 L1380.0,657.4 M1371.6,640.0 L1380.0,650.5"/>
<path stroke-width="2.20" d="M1371.7,640.0 L1380.5,654.0 L1390.9,669.7 L1403.1,680.1 L1411.9,701.0 L1417.1,715.0 L1413.6,725.5 L1404.9,732.4 L1396.2,734.2"/>
<path stroke-width="1.80" d="M1370.0,647.0 L1380.5,657.4 L1387.4,667.9 L1394.4,674.9 L1403.1,680.1"/>
<path stroke-width="1.80" d="M1370.0,729.0 L1378.7,726.3 L1390.9,727.2 L1396.2,734.2"/>
<path stroke-width="2.00" d="M1370.0,741.2 L1380.5,735.9 L1396.2,733.3"/>
<path stroke-width="4.00" d="M1394.4,734.2 L1408.4,731.6"/>
<path stroke-width="2.00" d="M1396.2,734.2 L1394.4,744.7 L1396.2,758.6 L1396.2,770.8 L1399.7,779.5 L1404.9,791.7 L1404.9,807.4 L1401.4,812.7 L1392.7,816.2"/>
<path stroke-width="1.80" d="M1406.6,734.2 L1403.1,746.4 L1397.9,762.1 L1397.9,772.6"/>
<path stroke-width="3.00" d="M1403.1,812.7 L1415.3,817.9"/>
<path stroke-width="1.10" d="M1384.0,781.3 L1392.7,770.8 L1397.9,772.6 M1399.7,772.6 L1406.6,770.8"/>
<path stroke-width="1.10" d="M1411.9,793.5 L1406.6,802.2"/>
<path stroke-width="1.10" d="M1558.4,640.0 L1563.6,642.6 L1568.8,640.0 L1579.3,654.0 L1589.8,659.2 L1596.7,669.7 L1600.2,681.9 L1605.5,694.1 L1614.2,706.3 L1615.9,712.4"/>
<path stroke-width="2.60" d="M886.5,722.0 L888.5,716.0 L890.1,709.2 L892.4,695.9 L897.9,684.7 L905.7,669.1 L916.9,656.8 L930.2,649.0 L948.1,642.4 L959.2,635.7 L965.9,632.3 L977.1,636.8 L988.2,640.1 L1001.6,646.8 L1015.0,652.4 L1028.3,656.8 L1031.7,664.6"/>
</g>
<g mask="url(#md0)">
<path stroke-width="2.50" d="M1270.0,376.3 L1281.6,380.9 L1288.6,390.2 L1300.2,399.5 L1304.9,403.0 L1316.5,405.3 L1323.5,406.5"/>
<path stroke-width="2.00" d="M1270.0,396.0 L1279.3,392.6 L1287.4,390.2 L1296.7,387.9 L1306.0,387.9 L1314.2,393.7 L1324.7,399.5"/>
<path stroke-width="1.80" d="M1281.6,381.5 L1279.3,386.7 L1279.3,392.0"/>
<path stroke-width="2.00" d="M1293.3,371.6 L1308.4,378.6 L1317.7,380.9 L1324.7,387.9 L1327.0,397.2"/>
<path stroke-width="2.00" d="M1317.7,380.9 L1318.8,374.0 L1323.5,369.3 L1335.1,369.3 L1349.1,371.6 L1354.9,377.4 L1353.7,389.1 L1351.4,393.7 L1339.8,394.9 L1330.5,389.1 L1327.0,385.6"/>
<path stroke-width="1.80" d="M1322.3,360.0 L1323.5,368.1"/>
<path stroke-width="1.80" d="M1351.4,360.0 L1353.7,369.3 L1357.2,376.3 L1365.3,375.1 L1368.8,369.3 L1374.7,365.8 L1390.0,360.0"/>
<path stroke-width="1.80" d="M1365.3,375.1 L1380.5,374.0 L1390.0,375.1"/>
<path stroke-width="1.80" d="M1360.7,360.0 L1363.0,365.8 L1365.3,374.0 L1366.5,383.3 L1374.7,390.2 L1381.6,394.9 L1384.0,406.5 L1390.0,408.8"/>
<path stroke-width="2.20" d="M1324.7,401.9 L1339.8,394.9 L1353.7,389.1"/>
<path stroke-width="2.00" d="M1328.1,403.0 L1342.1,401.9 L1356.0,411.2 L1368.8,418.1 L1372.3,422.8 L1374.7,429.8 L1377.0,436.7 L1381.6,440.2 L1390.0,439.1"/>
<path stroke-width="1.80" d="M1356.0,394.9 L1363.0,405.3 L1368.8,411.2 L1372.3,418.1 L1378.1,425.1 L1390.0,429.8"/>
<path stroke-width="2.20" d="M1323.5,406.5 L1323.5,418.1 L1327.0,429.8 L1331.6,441.4 L1327.0,448.4 L1318.8,460.0 L1316.5,480.0"/>
<path stroke-width="2.00" d="M1324.7,408.8 L1335.1,425.1 L1337.4,434.4 L1345.6,440.2 L1358.4,446.0 L1374.7,446.0 L1381.6,441.4"/>
<path stroke-width="2.00" d="M1325.8,411.2 L1330.5,424.0 L1335.1,434.4 L1351.4,447.2 L1353.7,453.0 L1357.2,464.7 L1363.0,470.5 L1361.9,476.3"/>
<path stroke-width="1.30" d="M1329.3,412.3 L1342.1,421.6 L1356.0,432.1"/>
<path stroke-width="1.80" d="M1304.9,404.2 L1304.9,408.8 L1310.7,414.7 L1310.7,424.0 L1308.4,429.8 L1309.5,441.4 L1314.2,457.7 L1309.5,461.2 L1308.4,480.0"/>
<path stroke-width="2.00" d="M1270.0,408.8 L1281.6,422.8 L1288.6,432.1 L1295.6,446.0 L1300.2,460.0 L1302.6,469.3 L1303.7,480.0"/>
<path stroke-width="1.80" d="M1270.0,446.0 L1277.0,455.3 L1281.6,467.0 L1285.1,480.0"/>
<path stroke-width="1.80" d="M1351.4,455.3 L1363.0,455.3 L1374.7,450.7 L1390.0,448.4 M1370.0,451.9 L1390.0,460.0"/>
<path stroke-width="1.80" d="M1271.2,360.0 L1271.2,371.6 L1270.0,376.3"/>
<path stroke-width="1.50" d="M1299.1,404.2 L1296.7,411.2 L1284.0,415.8 L1279.3,417.0"/>
<path stroke-width="1.80" d="M1367.7,360.0 L1374.7,363.5 L1390.0,360.0"/>
<path stroke-width="3.50" d="M1314.2,406.5 L1325.8,404.2 M1322.3,398.4 L1323.5,410.0 M1318.8,411.2 L1332.8,399.5"/>
<path stroke-width="4.50" d="M1318.8,403.0 L1328.1,407.7 M1321.2,408.8 L1327.0,400.7 M1317.7,406.5 L1330.5,405.3"/>
</g>
<g mask="url(#md1)">
<path stroke-width="2.20" d="M1143.3,360.8 L1153.7,359.1 L1164.2,349.8 M1146.7,354.4 L1158.4,363.7 M1153.7,350.9 L1154.9,364.9 M1163.0,349.2 L1164.8,352.1 L1159.5,359.1"/>
<path stroke-width="4.00" d="M1149.1,356.7 L1157.2,361.4 M1151.4,361.4 L1156.0,355.6"/>
<path stroke-width="5.50" d="M1150.8,357.3 L1155.5,360.8 M1152.6,355.0 L1154.3,362.6 M1149.1,359.7 L1157.2,358.5"/>
<path stroke-width="2.00" d="M1154.9,363.7 L1154.9,378.8 L1153.7,388.1 L1146.7,391.6 L1138.6,394.0 L1132.8,399.8 L1125.8,400.9 L1120.0,403.3"/>
<path stroke-width="1.50" d="M1149.1,363.7 L1146.7,374.2 L1143.3,378.8 L1134.0,377.7 L1128.7,380.0"/>
<path stroke-width="3.00" d="M1157.2,362.6 L1166.5,368.4 L1174.7,375.3 L1180.5,382.3 L1195.6,384.7 L1203.7,387.0 L1208.4,396.3 L1210.7,411.4 L1209.5,423.0"/>
<path stroke-width="2.00" d="M1170.0,368.4 L1178.1,363.7 L1189.8,359.1 L1201.4,356.7 L1213.0,362.6 L1223.5,363.7 L1240.0,357.9"/>
<path stroke-width="2.00" d="M1222.3,363.7 L1228.1,369.5 L1230.5,375.3 L1240.0,378.8"/>
<path stroke-width="1.50" d="M1170.0,368.4 L1174.7,370.7 L1177.0,376.5"/>
<path stroke-width="1.30" d="M1180.5,383.5 L1185.1,394.0 L1180.5,405.6"/>
<path stroke-width="2.00" d="M1195.6,384.7 L1199.1,392.8 L1201.4,404.4 L1208.4,411.4 L1221.2,414.9 L1230.5,409.1 L1240.0,402.1"/>
<path stroke-width="2.50" d="M1209.5,416.0 L1180.5,428.8 L1174.7,432.3 L1171.2,426.5 M1174.7,432.3 L1166.5,438.1 L1149.1,446.3 L1145.6,450.0"/>
<path stroke-width="3.00" d="M1209.5,423.0 L1199.1,430.0 L1192.1,439.3 L1186.3,450.0"/>
<path stroke-width="2.00" d="M1209.5,423.0 L1215.3,430.0 L1221.2,446.3 L1222.3,450.0"/>
<path stroke-width="2.00" d="M1120.0,432.3 L1127.0,432.3 L1135.1,446.3 L1131.6,450.0"/>
<path stroke-width="1.30" d="M1166.5,437.0 L1184.0,441.6 L1195.6,446.3 L1199.1,450.0"/>
<path stroke-width="1.80" d="M1215.3,426.5 L1230.5,420.7 L1236.3,411.4 L1240.0,404.4 M1235.1,413.7 L1236.3,426.5"/>
</g>
<g mask="url(#md2)">
<path stroke-width="2.00" d="M1070.0,485.1 L1084.0,475.8 L1089.8,472.3 L1093.3,470.0"/>
<path stroke-width="2.00" d="M1088.6,473.5 L1100.2,480.5 L1099.1,489.8 L1093.3,499.1 L1081.6,509.5 L1079.3,516.5 L1070.0,524.7"/>
<path stroke-width="2.00" d="M1070.0,510.7 L1079.3,516.5 L1087.4,524.7 L1088.6,535.1 L1100.2,537.4 L1108.4,538.6 L1116.5,529.3 L1122.3,523.5"/>
<path stroke-width="2.00" d="M1100.2,489.8 L1108.4,494.4 L1118.8,499.1 L1128.1,504.9 L1129.3,511.9 L1128.1,520.0"/>
<path stroke-width="3.00" d="M1087.4,525.8 L1100.2,524.7 L1114.2,523.5 L1122.3,522.3 L1128.1,520.0"/>
<path stroke-width="1.30" d="M1085.1,473.5 L1077.0,493.3 L1078.1,500.2 L1070.0,504.9"/>
<path stroke-width="1.80" d="M1104.9,479.3 L1114.2,470.0"/>
<path stroke-width="2.20" d="M1129.3,511.9 L1137.4,504.9 L1146.7,494.4 L1150.2,489.8 L1151.4,481.6 L1153.7,470.0"/>
<path stroke-width="1.30" d="M1135.1,503.7 L1139.8,485.1 L1142.1,470.0"/>
<path stroke-width="2.00" d="M1150.2,489.8 L1159.5,492.1 L1165.3,480.5 L1171.2,470.0"/>
<path stroke-width="1.80" d="M1145.6,470.0 L1146.7,484.0 L1150.2,489.8"/>
<path stroke-width="2.00" d="M1150.2,492.1 L1158.4,499.1 L1165.3,507.2 L1174.7,509.5 L1180.5,518.8 L1178.1,528.1 L1172.3,534.0 L1160.7,537.4 L1156.0,540.9"/>
<path stroke-width="1.80" d="M1165.3,507.2 L1159.5,516.5 L1158.4,528.1 L1160.7,537.4"/>
<path stroke-width="1.80" d="M1174.7,509.5 L1180.5,500.2 L1181.6,487.4 L1190.0,484.0 M1180.5,500.2 L1190.0,496.7"/>
<path stroke-width="1.80" d="M1180.5,521.2 L1190.0,525.8"/>
<path stroke-width="1.50" d="M1130.5,517.7 L1139.8,521.2 L1146.7,523.5 L1146.7,528.1 L1135.1,523.5"/>
<path stroke-width="2.20" d="M1124.7,524.7 L1135.1,537.4 L1136.3,551.4 L1139.8,564.2 L1151.4,568.8 L1158.4,574.7 L1159.5,580.5 L1165.3,590.0"/>
<path stroke-width="2.00" d="M1132.8,524.7 L1144.4,535.1 L1149.1,551.4 L1152.6,566.5 L1158.4,574.7"/>
<path stroke-width="1.80" d="M1139.8,530.5 L1151.4,539.8 L1158.4,540.9 L1157.2,551.4 L1154.9,568.8"/>
<path stroke-width="1.80" d="M1122.3,524.7 L1114.2,532.8 L1109.5,542.1 L1108.4,551.4 L1107.2,558.4"/>
<path stroke-width="2.00" d="M1118.8,525.8 L1107.2,537.4 L1099.1,539.8 L1092.1,544.4 L1080.5,546.7 L1073.5,557.2 L1070.0,565.3"/>
<path stroke-width="3.50" d="M1123.5,521.2 L1130.5,518.8 M1128.1,516.5 L1127.0,524.7"/>
</g>
<g mask="url(#md3)">
<path stroke-width="2.00" d="M1256.7,406.7 L1255.6,417.2 L1261.4,428.8 L1263.7,437.0 L1268.4,445.1 L1276.5,454.4 L1280.0,463.7 L1284.7,468.4 L1285.8,476.5 L1282.3,482.3 L1277.7,484.7"/>
<path stroke-width="1.30" d="M1242.8,410.2 L1247.4,417.2 L1249.8,428.8 L1254.4,434.7 L1261.4,445.1"/>
<path stroke-width="2.20" d="M1263.7,403.3 L1273.0,414.9 L1282.3,425.3 L1287.0,434.7 L1294.0,445.1 L1297.4,452.1 L1300.0,461.4"/>
<path stroke-width="2.20" d="M1263.7,403.3 L1268.4,398.6 L1278.8,394.0 L1287.0,390.5 L1300.0,387.0"/>
<path stroke-width="1.80" d="M1284.7,391.6 L1280.0,387.0 L1282.3,380.0"/>
<path stroke-width="2.00" d="M1266.0,402.1 L1267.2,391.6 L1266.0,380.0"/>
<path stroke-width="2.50" d="M1263.7,403.3 L1245.1,404.4 L1235.8,405.6 L1230.0,409.1 L1224.2,413.7 L1217.2,414.9 L1211.4,412.6"/>
<path stroke-width="1.80" d="M1237.0,406.7 L1233.5,418.4 L1226.5,421.9 L1216.0,425.3"/>
<path stroke-width="1.50" d="M1235.8,412.6 L1236.4,426.5"/>
<path stroke-width="2.00" d="M1209.1,424.2 L1214.9,426.5 L1219.5,438.1 L1223.0,449.8 L1223.0,459.1 L1246.3,460.2 L1240.5,446.3"/>
<path stroke-width="2.00" d="M1246.3,460.2 L1254.4,473.0 L1268.4,481.2 L1276.5,487.0 L1282.3,494.0"/>
<path stroke-width="2.00" d="M1276.5,487.0 L1284.7,482.3 L1300.0,473.0"/>
<path stroke-width="3.00" d="M1209.1,424.2 L1199.8,434.7 L1191.6,445.1 L1185.8,452.1 L1180.0,454.4"/>
<path stroke-width="2.00" d="M1185.8,450.9 L1188.1,463.7 L1191.6,473.0 L1197.4,477.7 L1210.2,473.0 L1223.0,471.9 L1230.0,482.3 L1238.1,490.5 L1241.6,500.0"/>
<path stroke-width="2.00" d="M1197.4,477.7 L1187.0,482.3 L1180.0,487.0"/>
<path stroke-width="3.00" d="M1180.0,430.0 L1207.9,414.9 L1210.2,413.7"/>
<path stroke-width="2.50" d="M1209.1,424.2 L1211.4,412.6 L1207.9,396.3 L1205.6,387.0 L1199.8,383.5 L1180.0,382.3"/>
<path stroke-width="1.80" d="M1199.8,383.5 L1197.4,387.0 L1199.8,398.6 L1203.3,409.1 L1210.2,412.6"/>
<path stroke-width="1.50" d="M1180.0,387.0 L1184.7,394.0 L1180.0,405.6"/>
<path stroke-width="1.80" d="M1282.3,494.0 L1290.5,496.3 L1300.0,491.6"/>
<path stroke-width="1.30" d="M1180.0,442.8 L1184.7,444.0 L1187.0,449.8 M1192.8,445.1 L1197.4,448.6"/>
<path stroke-width="2.00" d="M1238.1,490.5 L1249.8,496.3 L1261.4,497.4 L1276.5,492.2 L1282.3,494.0"/>
<path stroke-width="2.00" d="M1238.1,380.0 L1245.1,383.5 L1250.9,387.0 L1256.7,383.5 L1261.4,381.2 L1266.0,380.0"/>
</g>
</g></svg></div>
<div id="mapborder"></div>
<div id="maprb"></div>

<div id="status">
 <div class="cell" style="left:0;width:100px">MapsID: 3919</div>
 <div class="cell" style="left:102px;width:78px;padding-left:2px">png</div>
 <div class="cell" style="left:182px;width:98px;padding-left:2px">MinZoom: 8</div>
 <div class="cell" style="left:282px;width:98px;padding-left:2px">MaxZoom: 18</div>
 <div class="cell" style="left:382px;width:98px;padding-left:2px">TileSize: 256</div>
 <div class="cell" style="left:482px;width:98px;padding-left:2px">EPSG:3857</div>
 <div class="cell" style="left:582px;width:1338px;padding-left:2px;font-size:13.05px">Longitude=9.459229, Latitude=46.897739, tile=8/134/90.png</div>
</div>
</body></html>
